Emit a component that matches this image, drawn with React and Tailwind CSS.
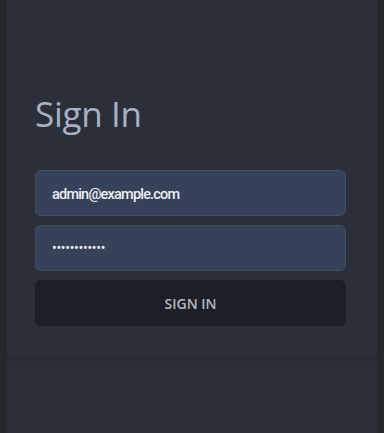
export default function App() {
  return (
    <div className="min-h-screen bg-[#25282d] px-[7px]">
      <div className="min-h-[433px] bg-[#2a2f3a]">
        <div className="px-7 pt-[88px] pb-[31px] shadow-[0_2px_6px_rgba(0,0,0,0.12)]">
          <h1 className="text-[35px] font-normal leading-[52px] tracking-[-0.3px] text-[#a9b2c4] font-['Open_Sans',sans-serif]">
            Sign In
          </h1>
          <form className="mt-[30px] flex flex-col gap-[9px] pr-[3px]" onSubmit={(e) => e.preventDefault()}>
            <input
              type="email"
              defaultValue="admin@example.com"
              className="h-[46px] rounded-md border border-[#454f65] bg-[#364259] px-4 pt-[3px] text-[14.5px] font-medium tracking-[-0.8px] text-[#eef0f5] outline-none font-['Roboto',sans-serif]"
            />
            <input
              type="password"
              defaultValue="adminpass123"
              className="h-[46px] rounded-md border border-[#454f65] bg-[#364259] px-4 text-[14px] tracking-[-0.3px] text-[#eef0f5] outline-none font-['Roboto',sans-serif]"
            />
            <button
              type="submit"
              className="h-[46px] rounded-md bg-[#1c1f26] text-[14px] font-semibold text-[#b3b8c2] font-['Open_Sans',sans-serif]"
            >
              SIGN IN
            </button>
          </form>
        </div>
      </div>
    </div>
  );
}
